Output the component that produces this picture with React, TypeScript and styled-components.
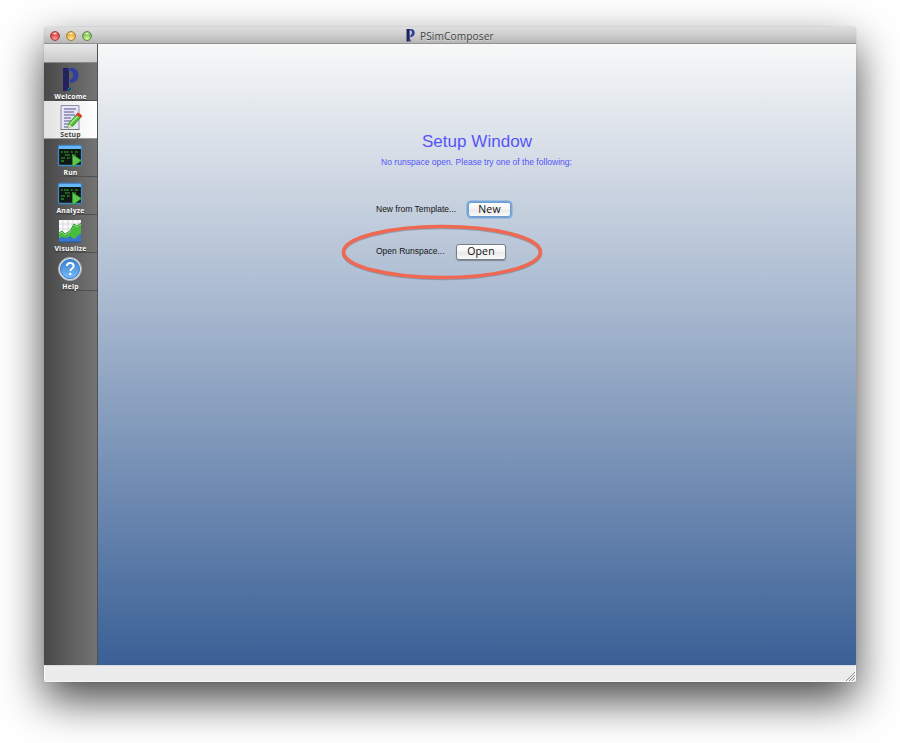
import React from 'react';
import styled, { createGlobalStyle, css } from 'styled-components';

const GlobalStyle = createGlobalStyle`
  * { box-sizing: border-box; }
  body { margin: 0; background: #fff; overflow: hidden; }
`;

const Desktop = styled.main`
  width: 900px;
  height: 743px;
  padding: 27px 44px 61px;
  overflow: hidden;
  background: #fff;
`;

const Window = styled.section`
  width: 812px;
  height: 655px;
  display: flex;
  flex-direction: column;
  overflow: hidden;
  border-radius: 4px 4px 3px 3px;
  background: #ececec;
  box-shadow: 0 18px 44px rgba(0, 0, 0, 0.72), 0 0 1px rgba(0, 0, 0, 0.4);
`;

const TitleBar = styled.header`
  height: 17px;
  flex: none;
  display: grid;
  grid-template-columns: 362px 1fr;
  align-items: center;
  background: linear-gradient(#dedede, #d0d0d0 45%, #b6b6b6);
  border-bottom: 1px solid #929292;
`;

const Lights = styled.div`
  display: flex;
  gap: 6px;
  padding: 1px 0 0 6px;
`;

const Light = styled.i<{ $tone: string; $edge: string; $glow: string }>`
  width: 10px;
  height: 10px;
  border-radius: 50%;
  border: 1px solid ${p => p.$edge};
  background:
    radial-gradient(ellipse 3px 1.5px at 50% 18%, #fff, transparent),
    radial-gradient(circle at 50% 85%, ${p => p.$glow}, ${p => p.$tone} 65%);
`;

const Title = styled.div`
  display: flex;
  align-items: center;
  gap: 5px;
  height: 16px;
  padding-top: 1px;
  color: #444;
  font: 10.2px/16px "Open Sans", sans-serif;
  letter-spacing: 0.08px;
  text-shadow: 0 1px rgba(255, 255, 255, 0.35);
`;

const Body = styled.div`
  height: 621px;
  display: grid;
  grid-template-columns: 54px 1fr;
`;

const Sidebar = styled.nav`
  background: linear-gradient(90deg, #484848, #747474);
  border-right: 1px solid #505050;
`;

const ToolHeader = styled.div`
  height: 19px;
  background: linear-gradient(#e8e8e8, #cacaca);
  border-bottom: 1px solid #8a8a8a;
`;

const Item = styled.button<{ $active?: boolean }>`
  width: 53px;
  height: 38px;
  padding: 2px 0 0;
  display: flex;
  flex-direction: column;
  align-items: center;
  border: 0;
  border-bottom: 1px solid #505050;
  background: transparent;
  color: #fff;
  font: 700 6.8px/9px "Open Sans", sans-serif;
  letter-spacing: 0.24px;
  text-shadow: 0 1px 1px #333;
  svg { flex: none; display: block; margin-right: 1px; }
  ${p => p.$active && css`
    background: linear-gradient(90deg, #e2e2e2, #fff);
    color: #444;
    border-bottom-color: #999;
    text-shadow: none;
  `}
`;

const Content = styled.div`
  display: flex;
  flex-direction: column;
  align-items: center;
  padding-top: 88px;
  background: linear-gradient(#f7f8f8, #3a6096);
  font-family: "Liberation Sans", Arial, sans-serif;
`;

const Heading = styled.h1`
  margin: 0;
  font-size: 17px;
  font-weight: 400;
  line-height: 20px;
  color: #5555f9;
  letter-spacing: 0.05px;
`;

const Hint = styled.p`
  margin: 5px 1px 0 0;
  font-size: 8.55px;
  line-height: 10px;
  color: #5555f9;
`;

const Actions = styled.div`
  width: 202px;
  margin-top: 33px;
  display: flex;
  flex-direction: column;
  gap: 23px;
`;

const ActionRow = styled.div<{ $gap: number }>`
  position: relative;
  height: 19px;
  display: flex;
  align-items: center;
  gap: ${p => p.$gap}px;
  color: #151515;
  font-size: 8.5px;
  line-height: 16px;
`;

const Label = styled.span<{ $width: number }>`
  width: ${p => p.$width}px;
  height: 18px;
  white-space: nowrap;
`;

const PushButton = styled.button<{ $width: number; $focused?: boolean }>`
  width: ${p => p.$width}px;
  height: ${p => (p.$focused ? 15 : 16)}px;
  padding: 0;
  border: 1px solid ${p => (p.$focused ? '#6f9ccc' : '#777e87')};
  border-radius: 3px;
  background: linear-gradient(#fff, #f4f4f4 48%, #e9e9e9 52%, #fafafa);
  box-shadow: ${p => (p.$focused ? '0 0 0 1.5px #75a6dc' : '0 1px 1px #7c8999')};
  color: #111;
  font: 500 10.5px/13px "Open Sans", sans-serif;
  letter-spacing: 0.2px;
`;

const Highlight = styled.svg`
  position: absolute;
  left: -39px;
  top: -22px;
  pointer-events: none;
`;

const StatusBar = styled.footer`
  height: 17px;
  display: flex;
  justify-content: flex-end;
  align-items: flex-end;
  border: 1px solid #f8f8f8;
  border-top-color: #d7dce3;
  background: #ececec;
`;

function LogoShape() {
  return (
    <>
      <path d="M1 0h6v19L5 23H1z" fill="#22235e" />
      <path d="M6 0h3c5 0 7.5 3 7.5 7 0 5-3.5 8-8.5 8v-3c2-1 3-3 3-6S9 3 6 2.5z" fill="#303f9f" />
      <path d="M6 19l3 1v3H6z" fill="#174a70" />
      <path d="M6 20h1v1H6zm2 2h1v1H8z" fill="#299ab5" />
    </>
  );
}

function Logo({ small = false }: { small?: boolean }) {
  return small ? (
    <svg width="9" height="13" viewBox="0 0 17 24" preserveAspectRatio="none"><LogoShape /></svg>
  ) : (
    <svg width="28" height="27" viewBox="0 0 28 27"><g transform="translate(6 3)"><LogoShape /></g></svg>
  );
}

function SetupIcon() {
  return (
    <svg width="28" height="27" viewBox="0 0 28 27">
      <path d="M5 2.5h18v24H5z" fill="#e5e5f4" stroke="#8d8eab" />
      <path d="M8 6h12M8 9h10M8 12h11M8 15h7M8 18h8M8 21h5M8 24h4" stroke="#8585b4" strokeWidth="1.3" />
      <path d="M4.5 26.5h19" stroke="#777" />
      <path d="M12 25l1-5 8-9 4 3-8 9z" fill="#52bc35" stroke="#248319" strokeWidth=".7" />
      <path d="M14 21l8-8" stroke="#b2f08c" strokeWidth="1.3" />
      <path d="M20 12l1-2c1-1 5 2 5 3l-1 2z" fill="#e63928" />
      <path d="M12 25l1-4 3 3z" fill="#eee5bb" />
    </svg>
  );
}

function ConsoleIcon() {
  return (
    <svg width="28" height="27" viewBox="0 0 28 27">
      <rect x="2.5" y="4.5" width="23" height="20" rx="1.5" fill="#101812" stroke="#4288c8" strokeWidth="1.3" />
      <path d="M3 8V5.5Q3 5 4 5h20q1 0 1 .5V8z" fill="#64b8fb" />
      <path d="M5 11h2m1 0h5m2 0h2m2 0h3M9 14h5m2 0h4M5 17h4m2 0h3" stroke="#2b8a2c" strokeWidth="1.5" strokeDasharray="1.7 .5" />
      <path d="M5 20h3" stroke="#3bbf38" strokeWidth="1.2" />
      <path d="M16.5 13.5v12.5l9-6.5z" fill="#5bc84c" stroke="#2c9228" strokeWidth=".8" />
    </svg>
  );
}

function ChartIcon() {
  return (
    <svg width="28" height="27" viewBox="0 0 28 27">
      <g transform="translate(0 2)">
        <path d="M3 1h22v22H3z" fill="#fafafa" />
        <path d="M7 1v22M12 1v22M17 1v22M22 1v22M3 5h22M3 10h22M3 15h22" stroke="#c9cdd1" strokeWidth=".7" />
        <path d="M3 15l3-2 3 3 5-3 4-7 3 2 4-3v18H3z" fill="#48bd3b" />
        <path d="M3 19l4-1 4 1 3-2 4 3 7-6v9H3z" fill="#3876cc" />
        <path d="M3 14l3-2 3 3 5-3 4-7 3 2 4-3" fill="none" stroke="#2a9924" />
        <path d="M3 23h22" stroke="#24589e" />
      </g>
    </svg>
  );
}

function HelpIcon() {
  return (
    <svg width="28" height="27" viewBox="0 0 28 27">
      <defs>
        <linearGradient id="helpBlue" x2="0" y2="1"><stop stopColor="#3c7fca" /><stop offset="1" stopColor="#75bcff" /></linearGradient>
      </defs>
      <circle cx="14" cy="14" r="11.5" fill="#dce2e8" stroke="#a4abb2" />
      <circle cx="14" cy="14" r="9.5" fill="url(#helpBlue)" stroke="#347ac2" />
      <path d="M10.8 11q.3-3 3.3-3 3.5 0 3.5 3c0 3-3.3 2.5-3.3 5" fill="none" stroke="#fff" strokeWidth="2" />
      <circle cx="14.2" cy="19" r="1.3" fill="#fff" />
    </svg>
  );
}

const items = [
  { name: 'Welcome', icon: <Logo /> },
  { name: 'Setup', icon: <SetupIcon />, active: true },
  { name: 'Run', icon: <ConsoleIcon /> },
  { name: 'Analyze', icon: <ConsoleIcon /> },
  { name: 'Visualize', icon: <ChartIcon /> },
  { name: 'Help', icon: <HelpIcon /> },
];

export default function App() {
  return (
    <>
      <GlobalStyle />
      <Desktop>
        <Window>
          <TitleBar>
            <Lights>
              <Light $tone="#db3e3e" $edge="#a14343" $glow="#ff9999" />
              <Light $tone="#e9a936" $edge="#a67d3a" $glow="#ffec99" />
              <Light $tone="#79bc50" $edge="#5e8a45" $glow="#d4ffa5" />
            </Lights>
            <Title><Logo small />PSimComposer</Title>
          </TitleBar>
          <Body>
            <Sidebar>
              <ToolHeader />
              {items.map(item => <Item key={item.name} $active={item.active}>{item.icon}{item.name}</Item>)}
            </Sidebar>
            <Content>
              <Heading>Setup Window</Heading>
              <Hint>No runspace open. Please try one of the following:</Hint>
              <Actions>
                <ActionRow $gap={10}>
                  <Label $width={82}>New from Template...</Label>
                  <PushButton $width={43} $focused>New</PushButton>
                </ActionRow>
                <ActionRow $gap={11}>
                  <Highlight width="212" height="66" viewBox="0 0 212 66">
                    <ellipse cx="105" cy="33" rx="98.5" ry="25.5" fill="none" stroke="#63748a" strokeOpacity=".5" strokeWidth="3.5" />
                    <ellipse cx="105" cy="32" rx="98.5" ry="25.5" fill="none" stroke="#ee6852" strokeWidth="3.5" />
                  </Highlight>
                  <Label $width={69}>Open Runspace...</Label>
                  <PushButton $width={50}>Open</PushButton>
                </ActionRow>
              </Actions>
            </Content>
          </Body>
          <StatusBar>
            <svg width="10" height="10" viewBox="0 0 10 10"><path d="M1 10l9-9M4 10l6-6M7 10l3-3" stroke="#909090" /></svg>
          </StatusBar>
        </Window>
      </Desktop>
    </>
  );
}
